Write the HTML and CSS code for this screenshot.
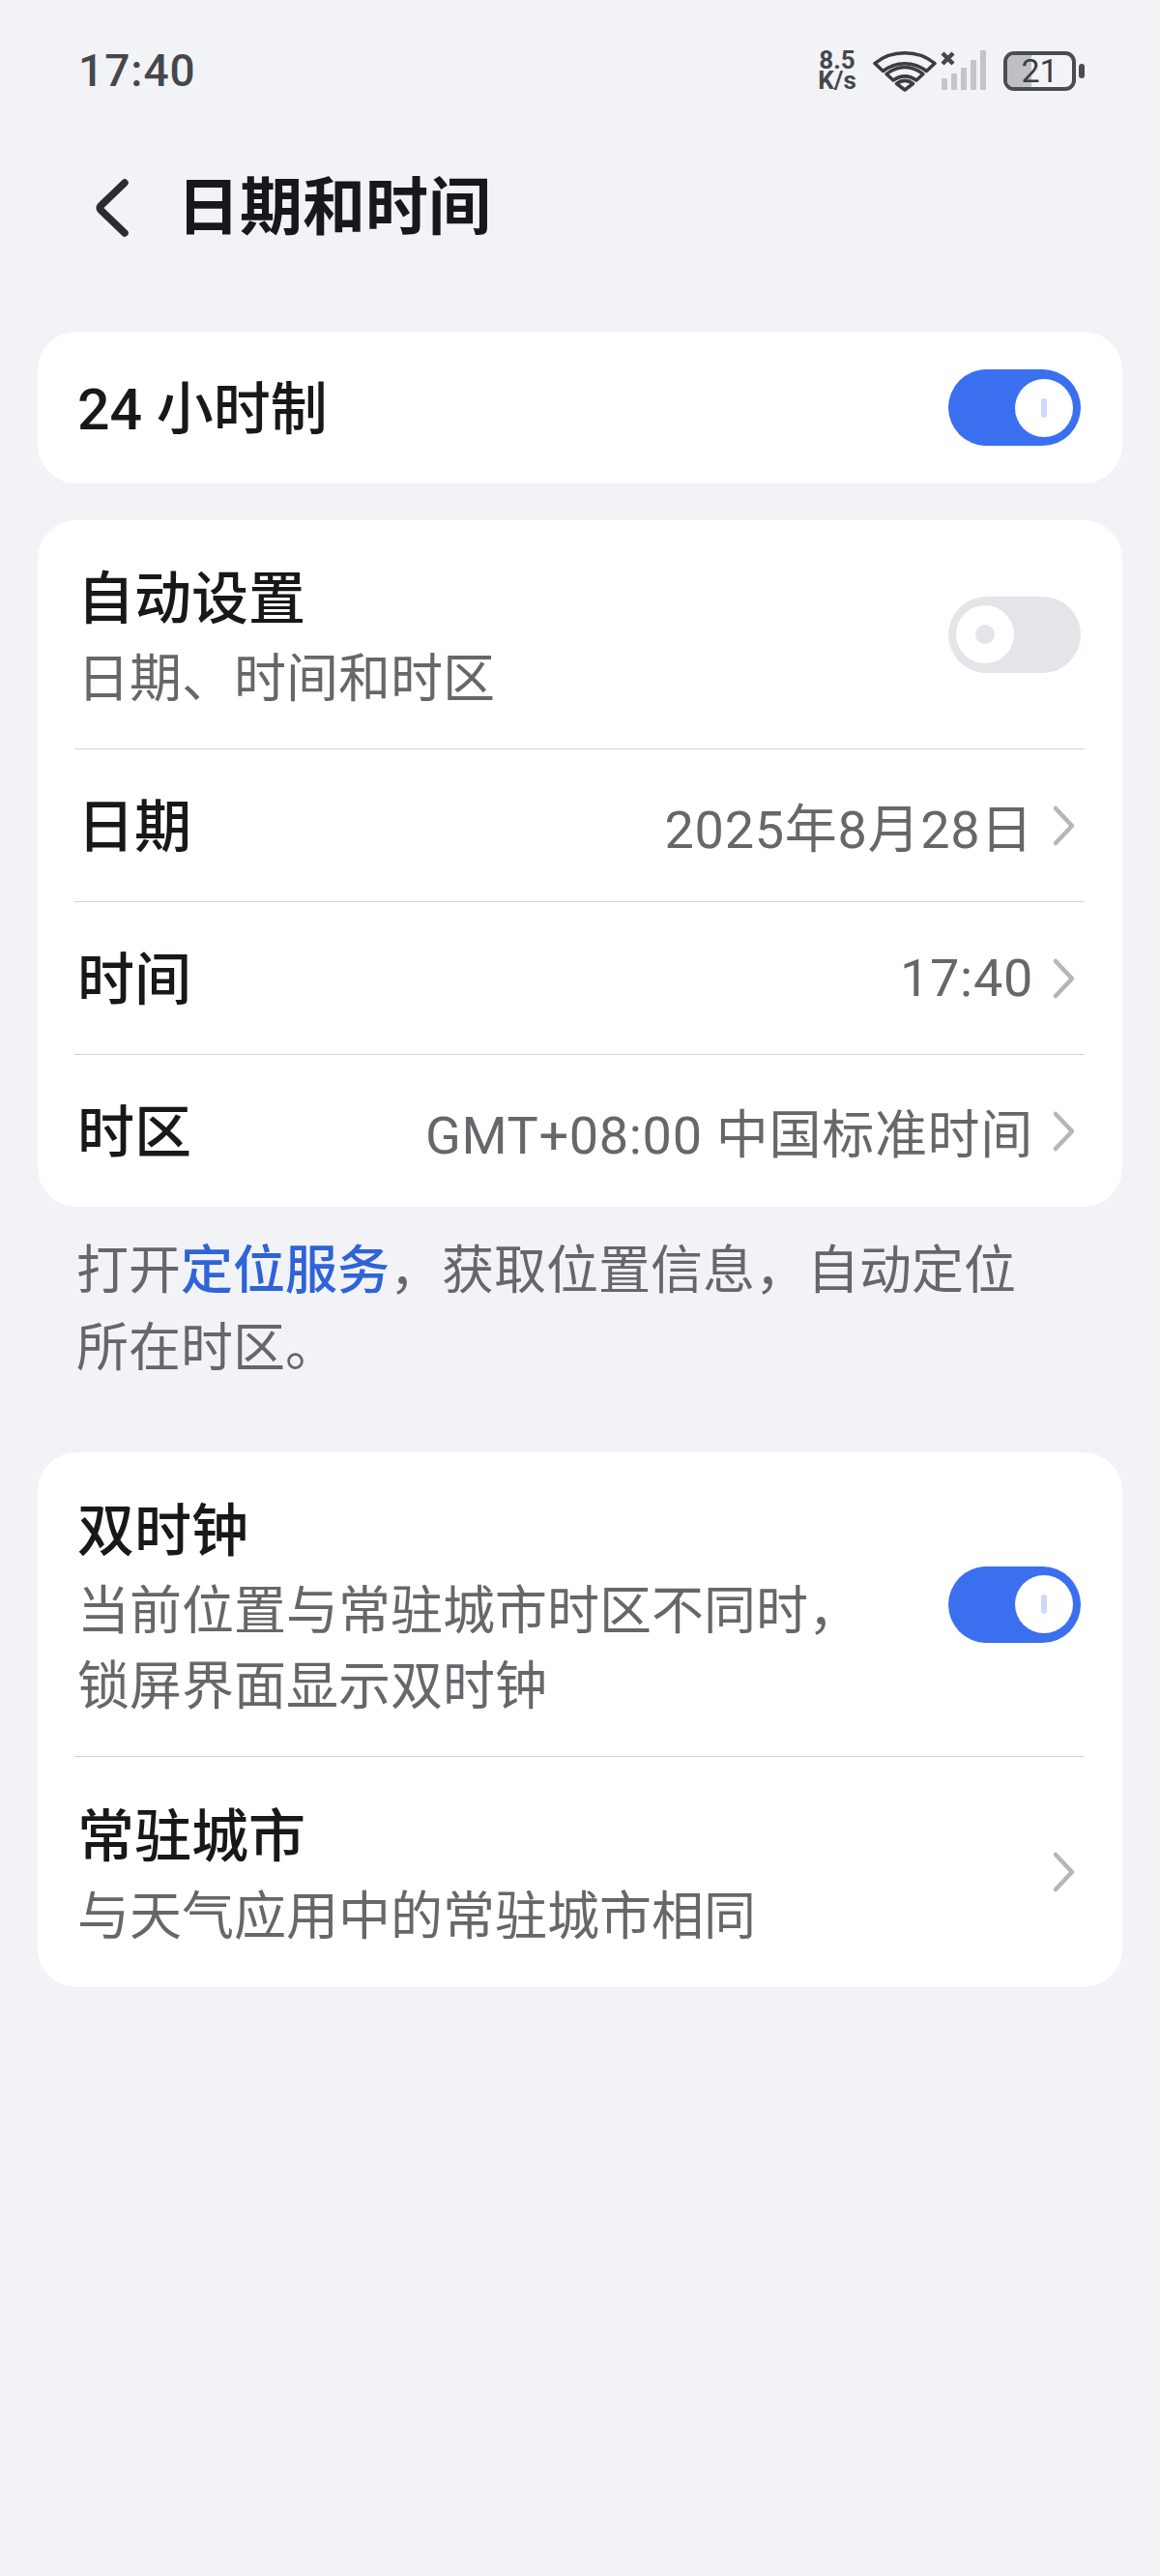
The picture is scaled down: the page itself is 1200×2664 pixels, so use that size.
FILE: index.html
```html
<!DOCTYPE html>
<html lang="zh-CN">
<head>
  <meta charset="UTF-8" />
  <meta name="viewport" content="width=device-width, initial-scale=1" />
  <title>日期和时间</title>
  <link rel="stylesheet" href="styles.css">
</head>
<body>
  <div class="status-bar">
    <div class="clock">17:40</div>
    <div class="status-icons">
      <div class="net-speed"><span>8.5</span><span>K/s</span></div>
      <svg class="wifi" viewBox="0 0 66 44" width="66" height="44">
        <path d="M2 14.5 C19 0 47 0 64 14.5 L55.5 22.5 C42 12 24 12 10.5 22.5 Z" fill="none" stroke="#3c3d40" stroke-width="3.5" stroke-linejoin="round"/>
        <path d="M14 25.5 C26 16 40 16 52 25.5 L45 32 C37 26.5 29 26.5 21 32 Z" fill="none" stroke="#3c3d40" stroke-width="3.5" stroke-linejoin="round"/>
        <path d="M24.5 35.5 C30 31.5 36 31.5 41.5 35.5 L33 42 Z" fill="none" stroke="#3c3d40" stroke-width="3.5" stroke-linejoin="round"/>
      </svg>
      <svg class="signal" viewBox="0 0 48 42" width="48" height="42">
        <path d="M2 3 L13 14 M13 3 L2 14" stroke="#46474a" stroke-width="4.5"/>
        <rect x="1" y="29" width="6" height="12" rx="1" fill="#c3c5c9"/>
        <rect x="11" y="24" width="6" height="17" rx="1" fill="#c3c5c9"/>
        <rect x="21" y="18" width="6" height="23" rx="1" fill="#c3c5c9"/>
        <rect x="31" y="10" width="6" height="31" rx="1" fill="#c3c5c9"/>
        <rect x="41" y="0" width="6" height="41" rx="1" fill="#c3c5c9"/>
      </svg>
      <div class="battery">
        <div class="battery-body">
          <div class="battery-fill"></div>
          <span class="battery-num">21</span>
        </div>
        <div class="battery-cap"></div>
      </div>
    </div>
  </div>

  <header class="title-bar">
    <svg class="back" viewBox="0 0 36 62" width="36" height="62">
      <path d="M31 5 L6 29 Q4.5 31 6 33 L31 57" fill="none" stroke="#2b2c2f" stroke-width="7.5" stroke-linecap="round" stroke-linejoin="round"/>
    </svg>
    <h1>日期和时间</h1>
  </header>

  <main>
    <section class="card">
      <div class="row row-single">
        <div class="row-title">24 小时制</div>
        <div class="switch switch-on"><div class="knob"><i></i></div></div>
      </div>
    </section>

    <section class="card">
      <div class="row row-auto">
        <div class="row-text">
          <div class="row-title">自动设置</div>
          <div class="row-sub">日期、时间和时区</div>
        </div>
        <div class="switch switch-off"><div class="knob"><i></i></div></div>
      </div>
      <div class="row row-single">
        <div class="row-title">日期</div>
        <div class="row-value">2025年8月28日</div>
        <svg class="chevron" viewBox="0 0 26 44" width="26" height="44"><path d="M4 4 L21 22 L4 40" fill="none" stroke="#b4b6ba" stroke-width="4.5" stroke-linecap="round" stroke-linejoin="round"/></svg>
      </div>
      <div class="row row-single">
        <div class="row-title">时间</div>
        <div class="row-value">17:40</div>
        <svg class="chevron" viewBox="0 0 26 44" width="26" height="44"><path d="M4 4 L21 22 L4 40" fill="none" stroke="#b4b6ba" stroke-width="4.5" stroke-linecap="round" stroke-linejoin="round"/></svg>
      </div>
      <div class="row row-single">
        <div class="row-title">时区</div>
        <div class="row-value">GMT+08:00 中国标准时间</div>
        <svg class="chevron" viewBox="0 0 26 44" width="26" height="44"><path d="M4 4 L21 22 L4 40" fill="none" stroke="#b4b6ba" stroke-width="4.5" stroke-linecap="round" stroke-linejoin="round"/></svg>
      </div>
    </section>

    <p class="note">打开<a href="#">定位服务</a>，获取位置信息，自动定位<br>所在时区。</p>

    <section class="card">
      <div class="row row-dual">
        <div class="row-text">
          <div class="row-title">双时钟</div>
          <div class="row-sub">当前位置与常驻城市时区不同时，<br>锁屏界面显示双时钟</div>
        </div>
        <div class="switch switch-on"><div class="knob"><i></i></div></div>
      </div>
      <div class="row row-city">
        <div class="row-text">
          <div class="row-title">常驻城市</div>
          <div class="row-sub">与天气应用中的常驻城市相同</div>
        </div>
        <svg class="chevron" viewBox="0 0 26 44" width="26" height="44"><path d="M4 4 L21 22 L4 40" fill="none" stroke="#b4b6ba" stroke-width="4.5" stroke-linecap="round" stroke-linejoin="round"/></svg>
      </div>
    </section>
  </main>
</body>
</html>
```

FILE: styles.css
```css
body {
  background-color: #f2f3f7;
  color: #17181a;
  font-family: "Roboto", "Noto Sans CJK SC", sans-serif;
  margin: 0;
  padding: 0;
  height: 2664px;
  overflow: hidden;
}

.status-bar {
  display: flex;
  align-items: center;
  justify-content: space-between;
  height: 44px;
  padding: 51px 78px 0 81px;
}

.clock {
  font-size: 46px;
  font-weight: 500;
  color: #46474a;
  letter-spacing: 1px;
}

.status-icons {
  display: flex;
  align-items: center;
}

.net-speed {
  display: flex;
  flex-direction: column;
  align-items: center;
  width: 42px;
  font-size: 26px;
  font-weight: 700;
  line-height: 21px;
  color: #46474a;
  margin-right: 16px;
}

.wifi {
  margin-right: 4px;
}

.signal {
  margin-right: 17px;
}

.battery {
  display: flex;
  align-items: center;
  gap: 3px;
}

.battery-body {
  position: relative;
  box-sizing: border-box;
  width: 75px;
  height: 41px;
  border: 4px solid #4b4c4f;
  border-radius: 11px;
  display: flex;
  align-items: center;
  justify-content: center;
  overflow: hidden;
}

.battery-fill {
  position: absolute;
  left: 0;
  top: 0;
  bottom: 0;
  width: 25px;
  background-color: #bfc0c3;
}

.battery-num {
  position: relative;
  font-size: 34px;
  color: #3c3d40;
}

.battery-cap {
  width: 6px;
  height: 15px;
  border-radius: 3px;
  background-color: #4b4c4f;
}

.title-bar {
  display: flex;
  align-items: center;
  height: 62px;
  margin-top: 89px;
  padding-left: 98px;
}

.title-bar h1 {
  margin: 0 0 0 49px;
  font-size: 65px;
  font-weight: 700;
  line-height: 62px;
}

main {
  padding: 97px 39px 0;
}

.card {
  background-color: #ffffff;
  border-radius: 40px;
  margin-bottom: 38px;
  padding: 0 39px 0 38px;
}

.row {
  display: flex;
  align-items: center;
  padding: 0 4px 0 3px;
  border-bottom: 1px solid #d2d3d6;
}

.row:last-child {
  border-bottom: none;
}

.row-single {
  height: 157px;
}

.row-single .row-title {
  padding-top: 4px;
}

.row-auto {
  height: 236px;
}

.row-dual {
  height: 314px;
}

.row-city {
  height: 238px;
}

.row-text {
  flex-grow: 1;
  padding-top: 9px;
}

.row-title {
  flex-grow: 1;
  font-size: 59px;
  font-weight: 500;
  line-height: 82px;
}

.row-text .row-title {
  margin-bottom: 3px;
}

.row-sub {
  font-size: 54px;
  line-height: 78px;
  color: #66676a;
}

.row-value {
  font-size: 54px;
  letter-spacing: 0.7px;
  color: #66676a;
  margin-right: 19px;
}

.chevron {
  margin-right: 4px;
}

.switch {
  box-sizing: border-box;
  width: 137px;
  height: 79px;
  border-radius: 40px;
  display: flex;
  align-items: center;
  padding: 0 8px;
}

.switch-on {
  background-color: #3a6ff0;
  justify-content: flex-end;
}

.switch-off {
  background-color: #e4e5e8;
  justify-content: flex-start;
}

.knob {
  width: 60px;
  height: 60px;
  border-radius: 50%;
  background-color: #ffffff;
  display: flex;
  align-items: center;
  justify-content: center;
}

.switch-on .knob i {
  width: 6px;
  height: 20px;
  border-radius: 3px;
  background-color: #ced9fa;
}

.switch-off .knob i {
  width: 20px;
  height: 20px;
  border-radius: 50%;
  background-color: #e4e5e8;
}

.note {
  margin: -38px 0 0;
  padding: 27px 40px 67px;
  font-size: 54px;
  line-height: 80px;
  color: #66676a;
}

.note a {
  color: #2f63d8;
  font-weight: 500;
  text-decoration: none;
}
```
